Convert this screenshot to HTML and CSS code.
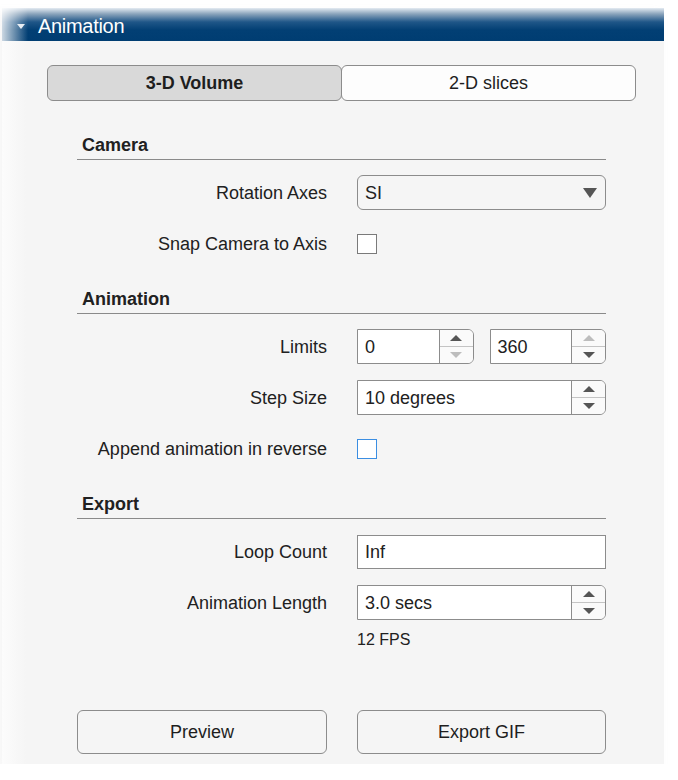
FILE: index.html
```html
<!DOCTYPE html>
<html lang="en">
  <head>
    <meta charset="UTF-8" />
    <meta name="viewport" content="width=device-width, initial-scale=1.0" />
    <title>Animation</title>
    <link rel="stylesheet" href="styles.css">
  </head>
  <body>
    <div class="panel">
      <div class="panel-header">
        <span class="caret"></span>
        <span class="panel-title">Animation</span>
      </div>
      <div class="panel-body">
        <div class="tabs">
          <button class="tab active">3-D Volume</button>
          <button class="tab">2-D slices</button>
        </div>

        <div class="section first">
          <div class="section-title">Camera</div>
          <div class="form">
            <label>Rotation Axes</label>
            <div class="select">
              <span>SI</span>
              <span class="select-arrow"></span>
            </div>
            <label>Snap Camera to Axis</label>
            <div><span class="checkbox"></span></div>
          </div>
        </div>

        <div class="section">
          <div class="section-title">Animation</div>
          <div class="form">
            <label>Limits</label>
            <div class="pair">
              <div class="spinner">
                <span class="spin-value">0</span>
                <div class="spin-btns">
                  <span class="spin-up"></span>
                  <span class="spin-down off"></span>
                </div>
              </div>
              <div class="spinner">
                <span class="spin-value">360</span>
                <div class="spin-btns">
                  <span class="spin-up off"></span>
                  <span class="spin-down"></span>
                </div>
              </div>
            </div>
            <label>Step Size</label>
            <div class="spinner">
              <span class="spin-value">10 degrees</span>
              <div class="spin-btns">
                <span class="spin-up"></span>
                <span class="spin-down"></span>
              </div>
            </div>
            <label>Append animation in reverse</label>
            <div><span class="checkbox focus"></span></div>
          </div>
        </div>

        <div class="section">
          <div class="section-title">Export</div>
          <div class="form">
            <label>Loop Count</label>
            <div class="text-field">Inf</div>
            <label>Animation Length</label>
            <div class="spinner">
              <span class="spin-value">3.0 secs</span>
              <div class="spin-btns">
                <span class="spin-up"></span>
                <span class="spin-down"></span>
              </div>
            </div>
          </div>
          <div class="hint">12 FPS</div>
        </div>

        <div class="actions">
          <button class="action">Preview</button>
          <button class="action">Export GIF</button>
        </div>
      </div>
    </div>
  </body>
</html>
```

FILE: styles.css
```css
body {
  margin: 0;
  padding: 0;
  background-color: #fff;
  font-family: "Liberation Sans", Arial, sans-serif;
  color: #212121;
}
.panel {
  width: 662px;
  margin: 8px 0 0 2px;
  background-color: #f5f5f5;
  box-shadow: -6px 6px 10px rgba(245, 245, 245, 0.9);
}
.panel-header {
  height: 33px;
  display: flex;
  align-items: center;
  background: linear-gradient(to right, rgba(255, 255, 255, 0.8), rgba(255, 255, 255, 0) 26px),
    linear-gradient(to bottom, #e4ebf2 0, #8aa3bb 6px, #1f5688 14px, #023f74 22px, #003d72 100%);
  color: #fff;
}
.caret {
  width: 0;
  height: 0;
  margin: 4px 13px 0 15px;
  border-left: 4px solid transparent;
  border-right: 4px solid transparent;
  border-top: 5px solid #e8eef4;
}
.panel-title {
  font-size: 20px;
  letter-spacing: -0.3px;
  padding-top: 3px;
}
.panel-body {
  padding: 24px 0 10px 45px;
  background: linear-gradient(to right, #fcfcfc, #f5f5f5 24px);
}
.tabs {
  display: flex;
  width: 589px;
}
.tab {
  flex: 1;
  height: 36px;
  font-family: inherit;
  font-size: 18px;
  color: #1e1e1e;
  background-color: #fdfdfd;
  border: 1px solid #8c8c8c;
  border-radius: 6px;
  padding: 0;
}
.tab.active {
  background-color: #d9d9d9;
  font-weight: bold;
}
.tab + .tab {
  margin-left: -1px;
}
.section {
  width: 529px;
  margin-left: 30px;
  margin-top: 28px;
}
.section.first {
  margin-top: 34px;
}
.section-title {
  font-size: 18px;
  font-weight: bold;
  line-height: 20px;
  padding: 0 0 4px 5px;
  border-bottom: 1px solid #8a8a8a;
  margin-bottom: 15px;
}
.form {
  display: grid;
  grid-template-columns: 250px 249px;
  column-gap: 30px;
  row-gap: 16px;
  grid-auto-rows: 35px;
  align-items: center;
}
.form label {
  text-align: right;
  font-size: 18px;
  padding-top: 2px;
}
.select {
  height: 35px;
  box-sizing: border-box;
  border: 1px solid #8c8c8c;
  border-radius: 6px;
  display: flex;
  align-items: center;
  justify-content: space-between;
  padding: 1px 8px 0 7px;
  font-size: 18px;
}
.select-arrow {
  width: 0;
  height: 0;
  border-left: 7px solid transparent;
  border-right: 7px solid transparent;
  border-top: 10px solid #555;
}
.checkbox {
  display: block;
  width: 18px;
  height: 18px;
  border: 1px solid #7a7a7a;
  background-color: #fff;
}
.checkbox.focus {
  border-color: #3b8ee2;
}
.pair {
  display: flex;
  gap: 16px;
}
.pair .spinner {
  flex: 1;
}
.spinner {
  height: 35px;
  box-sizing: border-box;
  display: flex;
  border: 1px solid #8c8c8c;
  border-radius: 0 6px 6px 0;
  background-color: #fff;
}
.spin-value {
  flex: 1;
  display: flex;
  align-items: center;
  padding: 2px 0 0 7px;
  font-size: 18px;
}
.spin-btns {
  width: 33px;
  display: flex;
  flex-direction: column;
  border-left: 1px solid #8c8c8c;
  border-radius: 0 5px 5px 0;
  background-color: #fafafa;
}
.spin-up,
.spin-down {
  flex: 1;
  display: flex;
  align-items: center;
  justify-content: center;
}
.spin-up {
  border-bottom: 1px solid #c4c4c4;
}
.spin-up::after,
.spin-down::after {
  content: "";
  width: 0;
  height: 0;
  border-left: 6px solid transparent;
  border-right: 6px solid transparent;
}
.spin-up::after {
  border-bottom: 6px solid #555;
}
.spin-down::after {
  border-top: 6px solid #555;
}
.spin-up.off::after {
  border-bottom-color: #bdbdbd;
}
.spin-down.off::after {
  border-top-color: #bdbdbd;
}
.text-field {
  height: 34px;
  box-sizing: border-box;
  border: 1px solid #8c8c8c;
  background-color: #fff;
  display: flex;
  align-items: center;
  padding: 2px 0 0 7px;
  font-size: 18px;
}
.hint {
  margin: 11px 0 0 280px;
  font-size: 16px;
  line-height: 18px;
}
.actions {
  width: 529px;
  margin: 61px 0 0 30px;
  display: grid;
  grid-template-columns: 250px 249px;
  column-gap: 30px;
}
.action {
  height: 44px;
  font-family: inherit;
  font-size: 18px;
  color: #1e1e1e;
  background-color: #f5f5f5;
  border: 1px solid #8c8c8c;
  border-radius: 6px;
}
```
